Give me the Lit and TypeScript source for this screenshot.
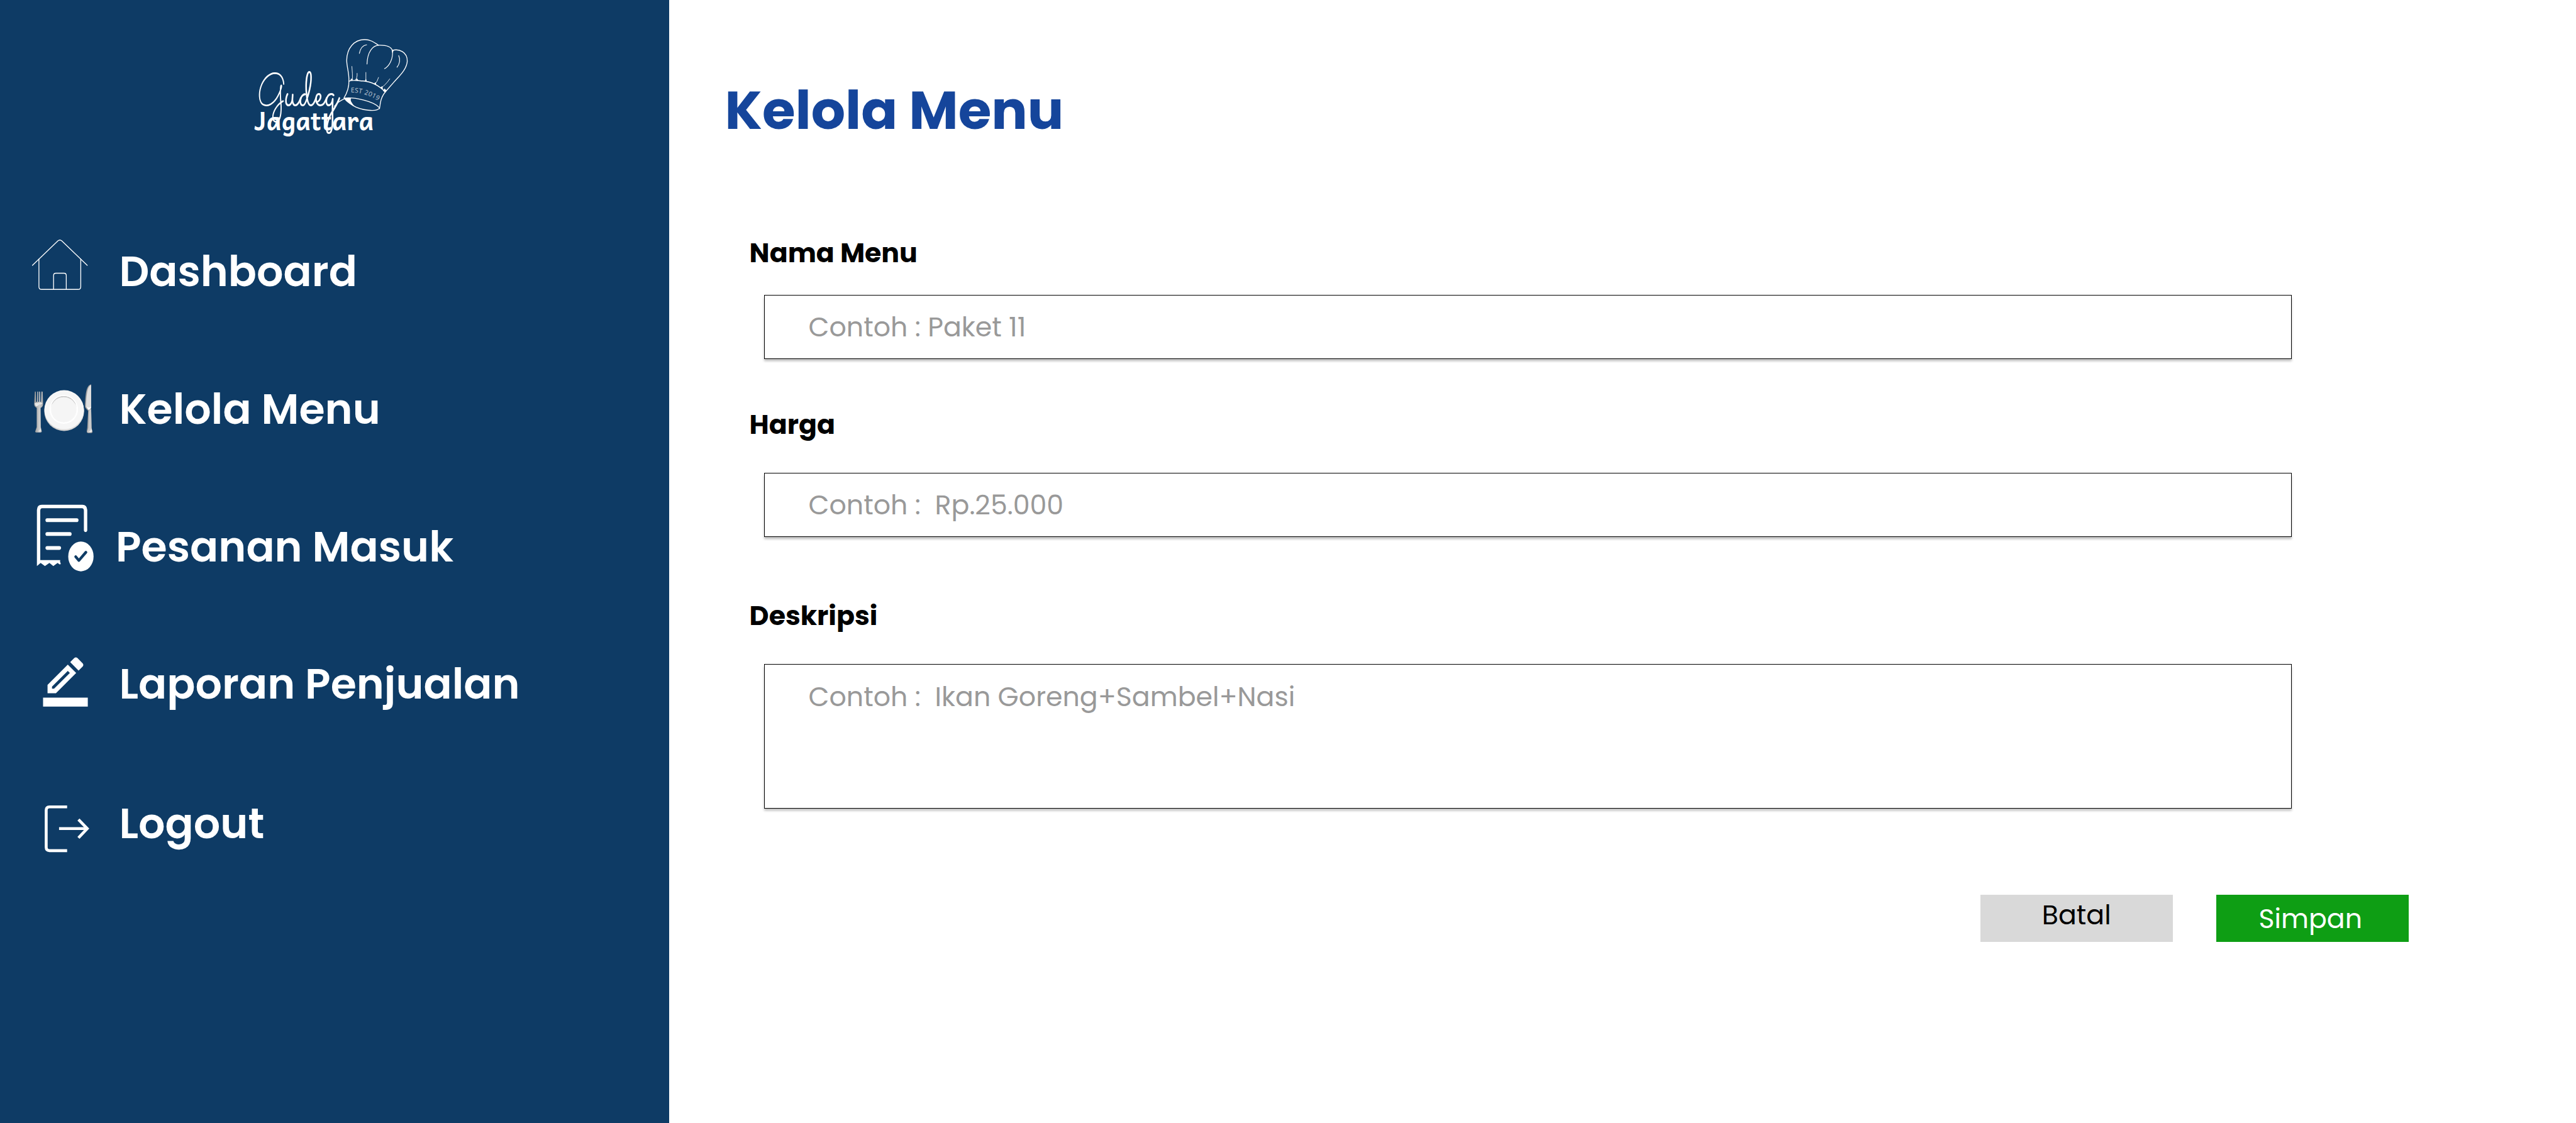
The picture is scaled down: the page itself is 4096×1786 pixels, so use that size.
import { LitElement, html, css, svg, unsafeCSS, type TemplateResult } from "lit";
import { customElement, property } from "lit/decorators.js";

// The design grid is 4606 units wide; the window shows it at 4096 pixels.
const u = (n: number) => unsafeCSS(`${((n * 4096) / 4606).toFixed(3)}px`);

const FONT = unsafeCSS(`Poppins, Inter, "Liberation Sans", sans-serif`);

const iconHome = svg`
  <g fill="none" stroke="#fff" stroke-width="1.5" stroke-linecap="round" stroke-linejoin="round">
    <path d="M58 474.3 L103.6 430.6 Q107 427.4 110.4 430.6 L156 474.3" />
    <path d="M69.6 463.4 V512.6 Q69.6 517.4 74.4 517.4 H139.6 Q144.4 517.4 144.4 512.6 V463.4" />
    <path d="M95.8 517.4 V492.5 Q95.8 488.4 99.9 488.4 H114.4 Q118.5 488.4 118.5 492.5 V517.4" />
  </g>`;

const iconPlate = svg`
  <defs>
    <linearGradient id="steel" x1="0" x2="1" y1="0" y2="0">
      <stop offset="0" stop-color="#8f8f8f" />
      <stop offset=".35" stop-color="#b4b4b4" />
      <stop offset=".6" stop-color="#d0d0d0" />
      <stop offset="1" stop-color="#a8a8a8" />
    </linearGradient>
    <linearGradient id="rim" x1="0" x2="0" y1="0" y2="1">
      <stop offset="0" stop-color="#c9c9c9" />
      <stop offset=".45" stop-color="#fff" />
    </linearGradient>
  </defs>
  <g transform="translate(40 670) scale(.33333)">
    <path fill="url(#steel)" d="M67 91 Q69 87 72 91 L74 144 H79 L80 91 Q82 87 85 91 V144 H90 V91 Q92 87 95 91 L96 144 H100 L102 91 Q105 87 109 91 L111 158 Q110 172 98 177 L99 280 L104 303 Q104 309 98 309 H74 Q68 309 69 303 L77 280 V177 Q63 170 63 158 Z" />
    <path fill="#e8e8e8" d="M66 150 H108 Q108 158 90 159 Q84 171 72 168 Q66 160 66 150 Z" />
    <path fill="#e6e6e6" d="M97 282 L101 301 Q94 306 86 302 Q95 297 97 282 Z" />
    <ellipse cx="224" cy="195" rx="106.500" ry="106" fill="#c6c6c6" />
    <ellipse cx="226" cy="193" rx="105" ry="105" fill="#dcdcdc" />
    <ellipse cx="224" cy="187" rx="106" ry="105" fill="#f6f6f6" />
    <ellipse cx="222" cy="185" rx="73.500" ry="74" fill="#f5f5f5" stroke="#fff" stroke-width="6" />
    <ellipse cx="222" cy="186" rx="69.500" ry="70" fill="none" stroke="url(#rim)" stroke-width="3" />
    <path fill="#c9c9c9" d="M157 160 Q176 115 222 114 Q268 115 287 160 Q264 120 222 119 Q180 120 157 160 Z" />
    <path fill="#9c9c9c" d="M369 51 C345 56 338 92 336 170 Q336 177 348 188 L353 193 L348 284 L345 303 Q344 311 352 312 H369 Q377 312 376 304 L371 284 L369 180 Z" />
    <path fill="#dedede" d="M369 54 C351 58 344 95 341 172 L353 180 Q362 174 369 176 Z" />
    <path fill="#c9c9c9" d="M356 191 L369 184 L371 284 L375 304 Q374 310 366 310 H352 Q347 309 349 303 L354 284 Z" />
    <path fill="#fff" d="M343 173 Q356 178 369 171 Q366 186 355 188 Z" />
    <path fill="#f2f2f2" d="M370 288 L373 303 Q366 309 357 305 Q368 300 370 288 Z" />
  </g>`;

const iconReceipt = svg`
  <g transform="translate(40 670) scale(.33333)">
    <g fill="#fff">
      <path d="M78 1028 V727 Q79 699 104 699 H322 Q346 699 348 727 V838 Q347 846 339 846 Q331 846 330 838 V731 Q330 718 319 718 H107 Q96 718 96 731 V996 H203 L202 1004 L206 1016 Q202 1021 198 1018 L189 1011 L166 1028 L145 1011 L121 1028 L98 1011 Z" />
      <rect x="124" y="772" width="177" height="20" rx="9.500" />
      <rect x="124" y="846" width="140" height="20.500" rx="9.500" />
      <rect x="124" y="921" width="83.500" height="20" rx="9.500" />
      <ellipse cx="314" cy="976.500" rx="68" ry="80" />
    </g>
    <path d="M286 978 L303 998 L341 954" fill="none" stroke="#0e3b65" stroke-width="14.500" stroke-linecap="round" stroke-linejoin="round" />
  </g>`;

const iconPencil = svg`
  <g transform="translate(69 1168) scale(4)" fill="#fff">
    <path d="M16.810 8.940l-3.750-3.750L4 14.250V18h3.750l9.060-9.060zM6 16v-.920l7.060-7.060.920.920L6.920 16H6z" />
    <path d="M19.710 6.040c.390-.390.390-1.020 0-1.410l-2.340-2.340c-.200-.200-.450-.290-.710-.290s-.510.100-.700.290l-1.830 1.830 3.750 3.750 1.830-1.830z" />
    <path d="M2 20h20v4H2z" />
  </g>`;

const iconLogout = svg`
  <g fill="none" stroke="#fff" stroke-width="5.200">
    <path d="M120 1443.600 H88.500 Q82.600 1443.600 82.600 1449.500 V1516 Q82.600 1521.900 88.500 1521.900 H120" />
    <path d="M105.600 1482.400 H155.500" />
    <path d="M140.300 1466.300 L156 1482.400 L140.300 1499" />
  </g>`;

@customElement("brand-logo")
export class BrandLogo extends LitElement {
  static styles = css`
    :host {
      display: block;
      width: ${u(330)};
      height: ${u(210)};
    }
    .art {
      display: block;
      width: 100%;
      height: 100%;
      overflow: visible;
    }
    .script {
      font: 400 245px Sacramento, "Great Vibes", cursive;
      fill: #fff;
    }
    .script.rest {
      font-size: 285px;
    }
    .name {
      font: 700 136px Andika, Poppins, sans-serif;
      fill: #fff;
    }
    .est {
      font: 400 35px "Open Sans", sans-serif;
      fill: #c3ced9;
    }
  `;

  render() {
    return html`<svg class="art" viewBox="0 0 990 630">
      <g fill="none" stroke="#fff" stroke-width="4.5" stroke-linecap="round" stroke-linejoin="round">
        <path d="M556 378 C572 352 584 322 583 285 C584 240 572 215 571 175 C572 110 610 64 668 64 C700 64 720 80 742 94 C775 93 808 97 816 122 C852 112 897 130 896 180 C893 225 852 260 822 295 L778 345 C762 365 755 385 752 402 L747 435" />
        <path d="M583 287 C606 277 636 286 660 286 C704 290 742 308 778 345" />
        <path d="M558 378 C610 371 720 395 747 430 C735 455 645 443 605 418 C583 405 566 392 558 378 Z" />
        <path stroke-width="4" d="M639 138 C643 118 655 95 678 92 M680 195 C682 130 710 96 742 94 M816 122 C822 165 800 207 774 220 M850 150 C860 170 855 195 841 212" />
        <path stroke-width="3" d="M599 208 Q603 250 602 280 M627 245 Q629 272 616 282 M674 240 V286 M742 267 Q735 292 722 303 M802 275 Q778 310 756 322" />
        <path d="M505 422 C518 404 540 390 560 381" />
      </g>
      <path fill="#fff" d="M557 377 L595 379 C588 392 598 402 612 421 C585 408 565 393 557 377 Z M668 286 L674 274 L680 289 Z M716 303 L726 292 L730 307 Z M766 338 L774 326 L786 338 L778 349 Z M812 120 L817 138 L824 119 Z M590 283 L596 272 L604 282 Z M618 282 L627 272 L634 285 Z M750 322 L762 314 L766 329 Z" />
      <path id="arc" fill="none" d="M593 347 C650 346 705 366 757 404" />
      <text class="est"><textPath href="#arc" textLength="155">EST 2019</textPath></text>
      <text class="script"><tspan x="94" y="417" textLength="146" lengthAdjust="spacingAndGlyphs">G</tspan></text>
      <text class="script rest"><tspan x="238" y="419" textLength="286" lengthAdjust="spacingAndGlyphs">udeg</tspan></text>
      <text class="name" x="74" y="551" textLength="642" lengthAdjust="spacingAndGlyphs">Jagattara</text>
    </svg>`;
  }
}

interface NavEntry {
  label: string;
  icon: TemplateResult;
  top: number;
  start: number;
}

const NAV: NavEntry[] = [
  { label: "Dashboard", icon: iconHome, top: 405.75, start: 213 },
  { label: "Kelola Menu", icon: iconPlate, top: 651.75, start: 213 },
  { label: "Pesanan Masuk", icon: iconReceipt, top: 897.75, start: 207 },
  { label: "Laporan Penjualan", icon: iconPencil, top: 1142.75, start: 213 },
  { label: "Logout", icon: iconLogout, top: 1392.75, start: 213 },
];

@customElement("side-nav")
export class SideNav extends LitElement {
  static styles = css`
    :host {
      display: flex;
      flex-direction: column;
      box-sizing: border-box;
      width: ${u(1197)};
      padding-top: ${u(50)};
      background: #0e3b65;
      color: #fff;
    }
    .logo {
      margin-left: ${u(430)};
    }
    .items {
      display: grid;
      grid-template-rows: ${u(246)} ${u(246)} ${u(245)} ${u(250)} ${u(160)};
      margin-top: ${u(145.75)};
    }
    .item {
      display: flex;
      align-items: center;
      height: ${u(160)};
      font: 600 ${u(75)} / ${u(112)} ${FONT};
      white-space: nowrap;
    }
    .icon {
      flex: none;
      width: ${u(213)};
      height: ${u(160)};
      overflow: visible;
    }
    .icon.tight {
      width: ${u(207)};
    }
  `;

  render() {
    return html`
      <brand-logo class="logo"></brand-logo>
      <nav class="items">
        ${NAV.map(
          (n) => html`<div class="item">
            <svg class="icon ${n.start < 213 ? "tight" : ""}" viewBox="0 ${n.top} ${n.start} 160">${n.icon}</svg>
            <span>${n.label}</span>
          </div>`,
        )}
      </nav>
    `;
  }
}

@customElement("form-field")
export class FormField extends LitElement {
  @property() label = "";
  @property() hint = "";
  @property({ type: Boolean, reflect: true }) multiline = false;

  static styles = css`
    :host {
      display: block;
    }
    .label {
      font: 700 ${u(48)} / ${u(72)} ${FONT};
      color: #000;
    }
    .box {
      box-sizing: border-box;
      display: flex;
      align-items: center;
      width: ${u(2732)};
      height: ${u(115)};
      margin: var(--gap, 0) 0 0 ${u(26)};
      padding: 0 ${u(78.6)};
      border: 1px solid #000;
      background: #fff;
      box-shadow: 0 ${u(4)} ${u(4)} rgba(0, 0, 0, 0.25);
      font: 400 ${u(48)} / ${u(72)} ${FONT};
      color: #999;
      white-space: pre;
    }
    :host([multiline]) .box {
      align-items: flex-start;
      height: ${u(258)};
      padding-top: ${u(21)};
    }
  `;

  render() {
    return html`<div class="label">${this.label}</div>
      <div class="box">${this.hint}</div>`;
  }
}

@customElement("app-root")
export class AppRoot extends LitElement {
  static styles = css`
    :host {
      display: flex;
      width: 100vw;
      height: 100vh;
      overflow: hidden;
      background: #fff;
    }
    .side {
      flex: none;
    }
    .main {
      flex: 1;
      display: flex;
      flex-direction: column;
      padding: ${u(124.4)} 0 0 ${u(99)};
    }
    .title {
      margin: 0;
      font: 700 ${u(96)} / ${u(144)} ${FONT};
      color: #15459b;
    }
    .form {
      display: flex;
      flex-direction: column;
      margin: ${u(147.6)} 0 0 ${u(44)};
    }
    .name {
      --gap: ${u(39)};
    }
    .price {
      --gap: ${u(50)};
      margin-top: ${u(81.5)};
    }
    .about {
      --gap: ${u(50.5)};
      margin-top: ${u(105)};
    }
    .actions {
      display: flex;
      justify-content: flex-end;
      gap: ${u(78)};
      margin: ${u(154)} ${u(298.6)} 0 0;
    }
    .btn {
      box-sizing: border-box;
      display: flex;
      align-items: center;
      justify-content: center;
      width: ${u(344.4)};
      height: ${u(85)};
      margin: 0;
      border: 0;
      font: 400 ${u(48)} / ${u(72)} ${FONT};
    }
    .cancel {
      padding: 0 0 ${u(12)};
      background: #d9d9d9;
      color: #000;
    }
    .save {
      padding: 0 ${u(8)} 0 0;
      background: #0e9e14;
      color: #fff;
    }
  `;

  render() {
    return html`
      <side-nav class="side"></side-nav>
      <main class="main">
        <h1 class="title">Kelola Menu</h1>
        <div class="form">
          <form-field class="name" label="Nama Menu" hint="Contoh : Paket 11"></form-field>
          <form-field class="price" label="Harga" hint="Contoh :  Rp.25.000"></form-field>
          <form-field class="about" multiline label="Deskripsi" hint="Contoh :  Ikan Goreng+Sambel+Nasi"></form-field>
        </div>
        <div class="actions">
          <button class="btn cancel">Batal</button>
          <button class="btn save">Simpan</button>
        </div>
      </main>
    `;
  }
}
